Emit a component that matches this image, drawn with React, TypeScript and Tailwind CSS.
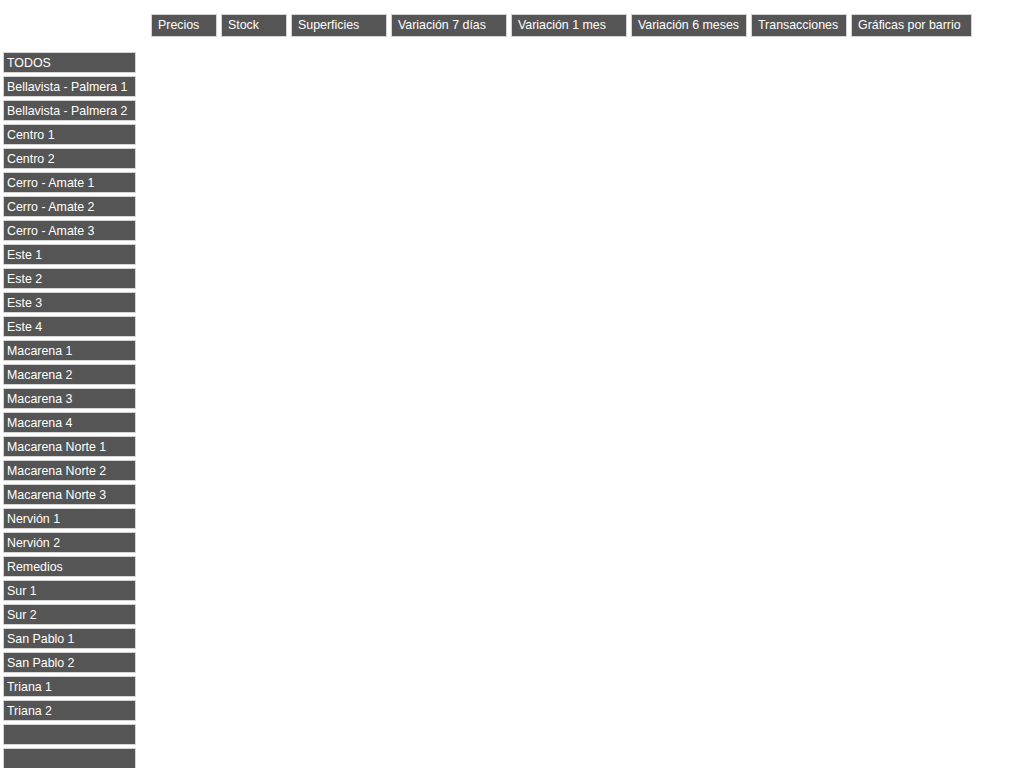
import React from "react";

const top: { label: string; w: string }[] = [
  { label: "Precios", w: "w-[66px]" },
  { label: "Stock", w: "w-[66px]" },
  { label: "Superficies", w: "w-[96px]" },
  { label: "Variación 7 días", w: "w-[116px]" },
  { label: "Variación 1 mes", w: "w-[116px]" },
  { label: "Variación 6 meses", w: "w-[116px]" },
  { label: "Transacciones", w: "w-[96px]" },
  { label: "Gráficas por barrio", w: "w-[121px]" },
];

const side = [
  "TODOS",
  "Bellavista - Palmera 1",
  "Bellavista - Palmera 2",
  "Centro 1",
  "Centro 2",
  "Cerro - Amate 1",
  "Cerro - Amate 2",
  "Cerro - Amate 3",
  "Este 1",
  "Este 2",
  "Este 3",
  "Este 4",
  "Macarena 1",
  "Macarena 2",
  "Macarena 3",
  "Macarena 4",
  "Macarena Norte 1",
  "Macarena Norte 2",
  "Macarena Norte 3",
  "Nervión 1",
  "Nervión 2",
  "Remedios",
  "Sur 1",
  "Sur 2",
  "San Pablo 1",
  "San Pablo 2",
  "Triana 1",
  "Triana 2",
  "",
  "",
];

export default function App() {
  return (
    <div
      className="min-h-[768px] bg-white text-[12.4px] text-white"
      style={{ fontFamily: '"Liberation Sans", Arial, sans-serif' }}
    >
      <div className="flex gap-[4px] pl-[151px] pt-[14px]">
        {top.map((t) => (
          <div
            key={t.label}
            className={`${t.w} h-[23px] shrink-0 border border-[#d4d4d4] bg-[#555555] pl-[6px] leading-[20px] whitespace-nowrap`}
          >
            {t.label}
          </div>
        ))}
      </div>
      <div className="mt-[15px] flex flex-col gap-[3px] pl-[3px]">
        {side.map((s, i) => (
          <div
            key={i}
            className="h-[21px] w-[133px] border border-[#d4d4d4] bg-[#555555] pl-[3px] leading-[20px] whitespace-nowrap"
          >
            {s}
          </div>
        ))}
      </div>
    </div>
  );
}
